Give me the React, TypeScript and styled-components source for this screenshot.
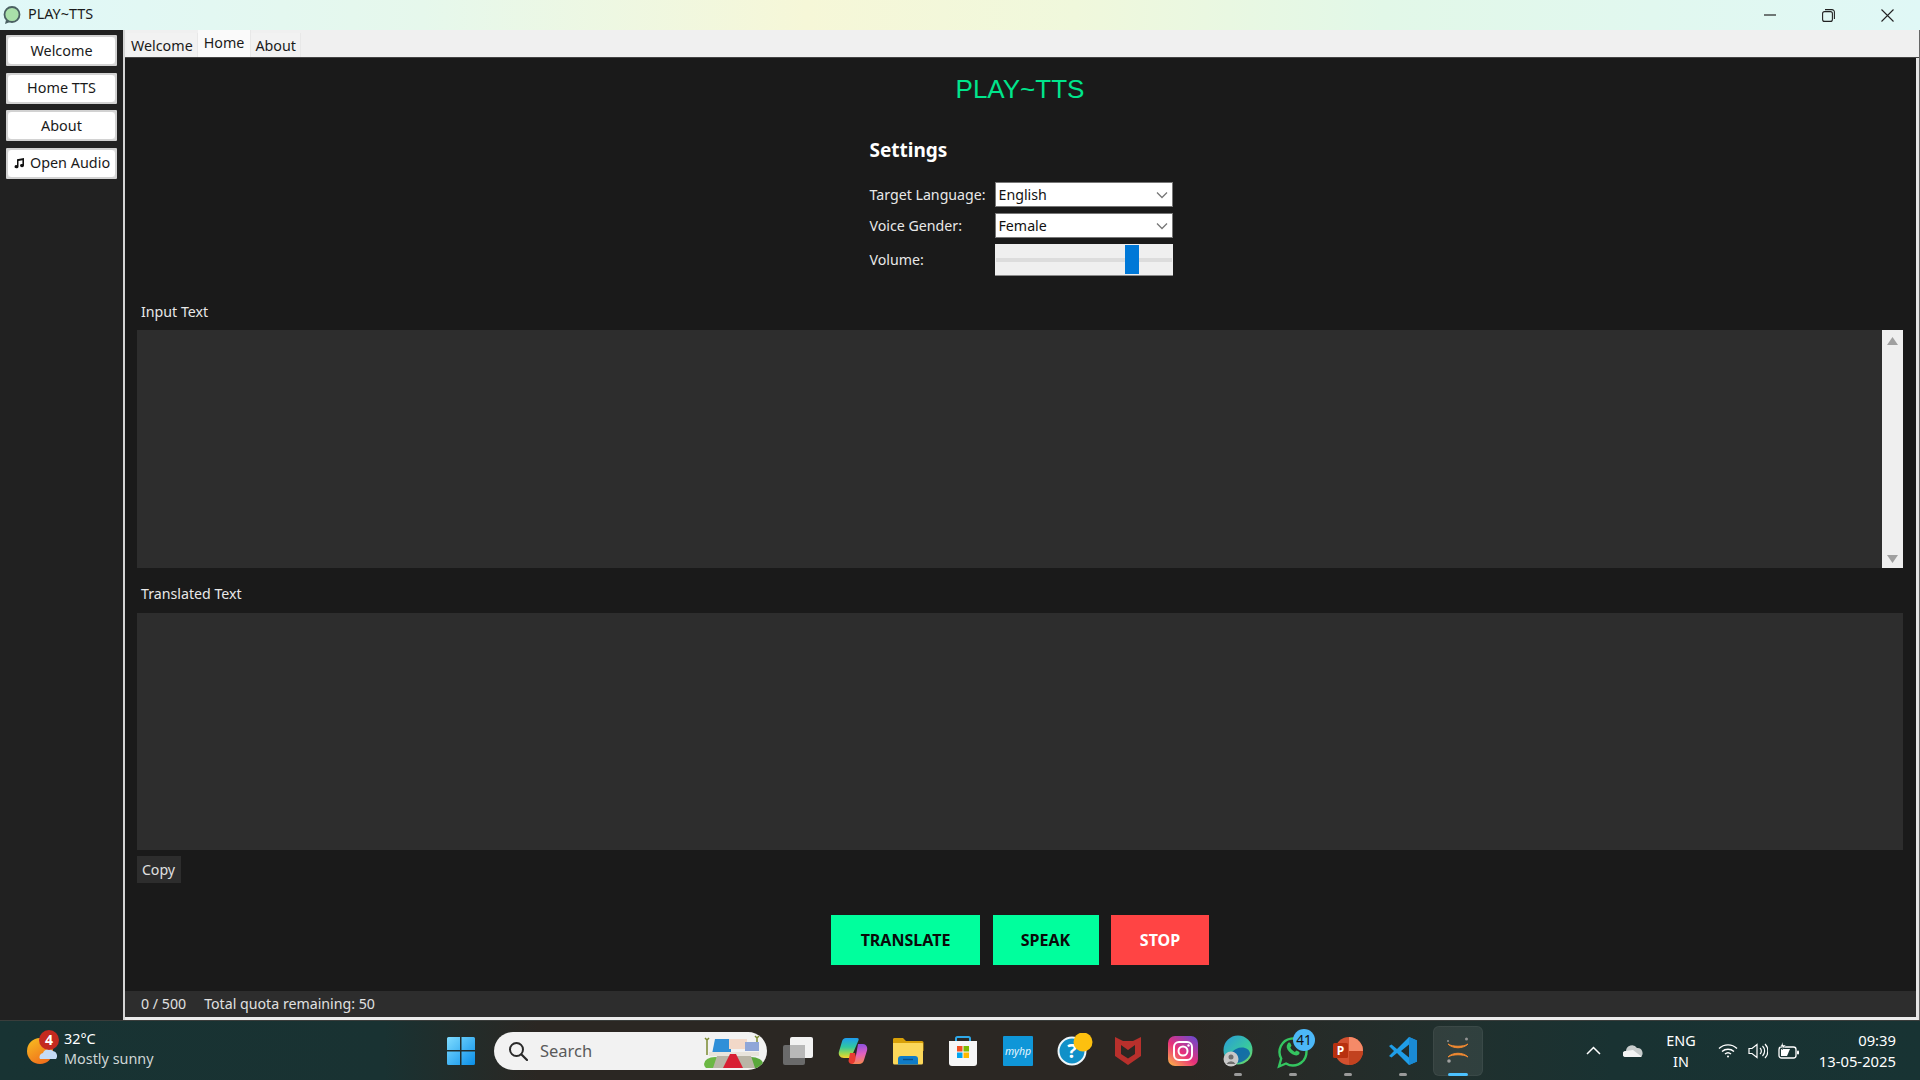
import React from "react";
import styled, { createGlobalStyle } from "styled-components";

const Global = createGlobalStyle`
  html, body { margin: 0; padding: 0; background: #1a1a1a; overflow: hidden; }
  * { box-sizing: border-box; }
  body { font-family: "Noto Sans", "Open Sans", sans-serif; }
`;

const UI = `"Noto Sans", "Open Sans", sans-serif`;

const Screen = styled.div`
  width: 1920px; height: 1080px; display: flex; flex-direction: column; overflow: hidden;
`;

const TitleBar = styled.header`
  height: 30px; flex: none; display: flex; align-items: center; padding-left: 2px;
  background: linear-gradient(90deg, #e0f8f8 0%, #e6f8ec 22%, #f6f7d8 42%, #f0f8dc 56%, #e2f8e8 72%, #e0f8f6 100%);
`;
const TitleText = styled.span`
  font: 14.4px/28px ${UI}; color: #1a1a1a; margin-left: 6px; height: 30px;
`;
const WinControls = styled.div`
  margin-left: auto; display: flex; height: 30px; padding-right: 3px;
`;
const WinBtn = styled.div`
  width: 59px; display: flex; align-items: center; justify-content: center; color: #222;
`;

const Main = styled.div`
  flex: 1; display: flex; min-height: 0;
`;
const Sidebar = styled.nav`
  width: 123px; flex: none; background: #212121; padding: 5px 6px 0 6px;
  display: flex; flex-direction: column; gap: 6.5px;
`;
const NavButton = styled.button`
  height: 31px; width: 111px; padding: 0; border: 2px solid #d2d2d2; border-radius: 1px; background: #e2e2e2;
  font: 14.4px/24px ${UI}; color: #1a1a1a; display: flex;
`;
const NavFace = styled.span`
  flex: 1; background: #fff; border-radius: 4px; display: flex; align-items: center; justify-content: center; gap: 5px;
`;

const Panel = styled.main`
  flex: 1; display: flex; flex-direction: column; min-width: 0;
  border-left: 2px solid #d4d4d4; border-right: 1px solid #666;
`;
const TabBar = styled.div`
  height: 28px; flex: none; background: #f0f0f0; display: flex; align-items: flex-end; padding-left: 2px;
  border-bottom: 1px solid #444;
`;
const Tab = styled.div<{ $on?: boolean }>`
  height: ${p => (p.$on ? 27 : 24)}px; padding: ${p => (p.$on ? "0 6px 3px" : "0 4px")};
  background: ${p => (p.$on ? "#fafafa" : "#f2f2f2")};
  border-right: 1px solid #e8e8e8;
  font: 14.3px ${UI}; color: #1a1a1a; display: flex; align-items: center;
`;
const Body = styled.div`
  flex: 1; min-height: 0; display: flex; border-right: 3px solid #e6e6e6;
`;
const Content = styled.section`
  flex: 1; min-width: 0; background: #1a1a1a; display: flex; flex-direction: column; padding: 0 13px 0 12px;
`;
const AppTitle = styled.h1`
  margin: 15px 0 0; height: 32px; text-align: center;
  font: 400 26px/32px "Liberation Sans", sans-serif; color: #00e58c;
`;
const Settings = styled.div`
  width: 303px; align-self: center; margin: 32px 0 0 2px;
`;
const SettingsHead = styled.h2`
  margin: 0; height: 28px; font: 700 19px/27px ${UI}; color: #fff;
`;
const SettingsGrid = styled.div`
  margin-top: 17px; display: grid; grid-template-columns: 125px 178px; grid-template-rows: 25px 25px 32px; row-gap: 6px; align-items: center;
`;
const FieldLabel = styled.label`
  font: 14.2px/20px ${UI}; color: #e8e8e8;
`;
const Combo = styled.div`
  height: 25px; background: #fff; border: 1px solid #777; display: flex; align-items: center; padding: 0 4px 0 3px;
  font: 14.2px ${UI}; color: #111; justify-content: space-between;
`;
const Slider = styled.div`
  height: 32px; background: #efefef; border-bottom: 1px solid #8a8a8a; position: relative; display: flex; align-items: center; padding: 0 1px;
`;
const SliderTrack = styled.div`
  flex: 1; height: 4px; background: #dcdcdc;
`;
const SliderThumb = styled.div`
  position: absolute; left: 130px; top: 1px; width: 14px; height: 29px; background: #0078d7;
`;
const SectionLabel = styled.div<{ $top: number; $gap: number }>`
  margin: ${p => p.$top}px 0 ${p => p.$gap}px 4px; height: 20px; font: 14.2px/20px ${UI}; color: #e8e8e8;
`;
const TextPane = styled.div<{ $h: number }>`
  height: ${p => p.$h}px; background: #2d2d2d; display: flex; justify-content: flex-end; flex: none;
`;
const Scrollbar = styled.div`
  width: 21px; background: #efefef; display: flex; flex-direction: column; justify-content: space-between; align-items: center; padding: 7px 0 5px;
`;
const CopyBtn = styled.button`
  margin-top: 6px; width: 44px; height: 27px; padding: 0 1px 1px 0; border: 0; background: #2d2d2d; color: #e0e0e0; font: 14.2px ${UI};
`;
const Actions = styled.div`
  margin-top: 32px; display: flex; justify-content: center; gap: 12.5px;
`;
const ActionBtn = styled.button<{ $bg: string; $fg: string; $w: number }>`
  width: ${p => p.$w}px; height: 50px; padding: 0; border: 1px solid ${p => p.$bg}; background: ${p => p.$bg}; color: ${p => p.$fg};
  font: 700 16px ${UI};
`;
const StatusBar = styled.footer`
  height: 29px; flex: none; background: #2d2d2d; border-bottom: 3px solid #ececec; display: flex; align-items: center; padding: 0 0 2px 16px; gap: 18px;
  font: 14.2px ${UI}; color: #e0e0e0; border-right: 3px solid #e6e6e6;
`;

const Taskbar = styled.footer`
  height: 60px; flex: none; display: flex; align-items: center; border-top: 1px solid #3a3d3b;
  background: linear-gradient(90deg, #183333 0%, #193232 20%, #2b2723 28%, #2b2723 62%, #20302e 76%, #193232 84%, #183333 100%);
`;
const Weather = styled.div`
  width: 446px; flex: none; display: flex; align-items: center; padding-left: 26px;
`;
const WeatherIconBox = styled.div`
  width: 38px; height: 42px; flex: none; margin-top: -4px;
`;
const WeatherText = styled.div`
  display: flex; flex-direction: column; font: 14.4px/20px ${UI}; color: #fff; margin-top: -4px;
`;
const WeatherSub = styled.span`
  color: #cfd6d6;
`;
const SearchBox = styled.div`
  width: 273px; height: 38px; margin-left: 18px; margin-right: 3px; border-radius: 19px; background: #f2f2f2; display: flex; align-items: center; padding-left: 14px; overflow: hidden;
  font: 16.5px ${UI}; color: #5a5a5a; flex: none;
`;
const SearchWord = styled.span`
  margin-left: 12px;
`;
const SearchArt = styled.svg`
  margin-left: auto; margin-right: 4px; flex: none;
`;
const Dock = styled.div`
  position: relative; width: 55px; height: 50px; flex: none; display: flex; align-items: center; justify-content: center;
`;
const ActiveTile = styled.div`
  position: absolute; left: 2.5px; top: 0; width: 50px; height: 50px; border-radius: 6px; background: #ffffff14; border: 1px solid #ffffff0d;
`;
const RunDot = styled.span<{ $active?: boolean }>`
  position: absolute; bottom: 0; left: 50%; transform: translateX(-50%); height: 3px; border-radius: 2px;
  width: ${p => (p.$active ? 20 : 8)}px; background: ${p => (p.$active ? "#4cc2ff" : "#9a9a9a")};
`;
const Tray = styled.div`
  margin-left: auto; display: flex; align-items: center; padding-right: 24px; color: #fff;
`;
const TraySlot = styled.div<{ $w: number; $mr?: number }>`
  width: ${p => p.$w}px; margin-right: ${p => p.$mr ?? 0}px; display: flex; align-items: center; justify-content: center; flex: none;
`;
const Lang = styled.div`
  text-align: center; font: 14.4px/21px ${UI}; color: #fff; width: 50px; flex: none;
`;
const Clock = styled.div`
  text-align: right; font: 14.8px/21px ${UI}; color: #fff; width: 92px; white-space: nowrap;
`;

const Chevron = () => (
  <svg width="12" height="8" viewBox="0 0 12 8"><path d="M1 1.500l5 5 5-5" fill="none" stroke="#777" strokeWidth="1.300" /></svg>
);

const AppLogo = () => (
  <svg width="20" height="20" viewBox="0 0 20 20">
    <circle cx="10" cy="9.500" r="7.500" fill="#a9dfa9" stroke="#4a6062" strokeWidth="1.800" />
    <path d="M4 15l-1 4 5-2z" fill="#4a6062" />
  </svg>
);

const Music = () => (
  <svg width="12" height="12" viewBox="0 0 12 12">
    <path d="M4 2.200L11 1v7.600a2 1.600 0 1 1-1.600-1.600V3.300L5.500 4v5.800A2 1.600 0 1 1 4 8.200z" fill="#111" />
  </svg>
);

const WeatherIcon = () => (
  <svg width="38" height="42" viewBox="0 0 38 42">
    <defs>
      <linearGradient id="sun" x1="0" y1="0" x2="0.6" y2="1">
        <stop offset="0" stopColor="#f8c020" /><stop offset="1" stopColor="#f0701c" />
      </linearGradient>
    </defs>
    <circle cx="14" cy="23" r="13" fill="url(#sun)" />
    <path d="M14 31a4 4 0 0 1 3-6 6 6 0 0 1 10-2 5 5 0 0 1 3 8z" fill="#c5dcf5" />
    <circle cx="23" cy="12" r="10" fill="#c42a20" />
    <text x="23" y="17" textAnchor="middle" fontFamily="Noto Sans" fontWeight="700" fontSize="14" fill="#fff">4</text>
  </svg>
);

const WinLogo = () => (
  <svg width="30" height="30" viewBox="0 0 30 30">
    <defs>
      <linearGradient id="w" x1="0" y1="0" x2="1" y2="1">
        <stop offset="0" stopColor="#7fdcff" /><stop offset="1" stopColor="#0a8fe8" />
      </linearGradient>
    </defs>
    <path d="M1 2.500A1.500 1.500 0 0 1 2.500 1H14v13H1zM15.500 1H27.500A1.500 1.500 0 0 1 29 2.500V14H15.500zM1 15.500H14V29H2.500A1.500 1.500 0 0 1 1 27.500zM15.500 15.500H29V27.500A1.500 1.500 0 0 1 27.500 29H15.500z" fill="url(#w)" />
  </svg>
);

const Magnifier = () => (
  <svg width="20" height="20" viewBox="0 0 20 20">
    <circle cx="8.500" cy="8.500" r="6.500" fill="none" stroke="#2a2a2a" strokeWidth="2" />
    <path d="M13.500 13.500L19 19" stroke="#2a2a2a" strokeWidth="2.200" strokeLinecap="round" />
  </svg>
);

const SearchIllustration = () => (
  <SearchArt width="60" height="34" viewBox="0 0 60 34">
    <ellipse cx="12" cy="30" rx="11" ry="7" fill="#6cb844" />
    <ellipse cx="48" cy="30" rx="12" ry="7" fill="#5aa83c" />
    <path d="M2 4l2 2 2-2M4 5v16" stroke="#7a8a30" strokeWidth="1.500" fill="none" />
    <path d="M52 2l2 2 2-2M54 3v14" stroke="#7a8a30" strokeWidth="1.500" fill="none" />
    <path d="M9 20l3-15h16v15z" fill="#2f8fd8" />
    <path d="M26 5h18v10H26z" fill="#f2d8c8" />
    <path d="M42 8h14v9H42z" fill="#8fa6d8" />
    <path d="M6 18h50v4H6z" fill="#e8e4dc" />
    <path d="M14 22h34l4 12H10z" fill="#b9b5a6" />
    <path d="M27 20h6l7 14H20z" fill="#d81f33" />
  </SearchArt>
);

const TaskView = () => (
  <svg width="32" height="30" viewBox="0 0 32 30">
    <rect x="1" y="9" width="22" height="20" rx="2" fill="#6a6a6a" />
    <rect x="8" y="1" width="23" height="21" rx="2" fill="#f2f2f2" />
    <rect x="8" y="9" width="15" height="13" fill="#b8b8b8" />
  </svg>
);

const Copilot = () => (
  <svg width="30" height="26" viewBox="0 0 30 26">
    <defs>
      <linearGradient id="c1" x1="0.3" y1="0" x2="0.3" y2="1">
        <stop offset="0" stopColor="#1f9cf0" /><stop offset="0.45" stopColor="#30c8a0" /><stop offset="0.8" stopColor="#a8d848" /><stop offset="1" stopColor="#f8d030" />
      </linearGradient>
      <linearGradient id="c2" x1="0.5" y1="0" x2="0.6" y2="1">
        <stop offset="0" stopColor="#8a50e0" /><stop offset="0.5" stopColor="#e060c0" /><stop offset="1" stopColor="#f8884c" />
      </linearGradient>
    </defs>
    <path d="M8 0h11c2 0 2 1.500 1.200 3L13 20H6C2 20 0 17 1 13.500L4 3.500C4.500 1.500 6 0 8 0z" fill="url(#c1)" />
    <path d="M12 15l5 0 2 8c.300 1.500-1 3-3 3h-2c-2 0-3-1-3.500-3z" fill="#e83a30" />
    <path d="M20 6h5c3 0 5 3 4 6.500l-3 9.500c-.600 2.500-2.500 4-5 4h-7.500c2 0 3-1.500 3.500-3z" fill="url(#c2)" />
  </svg>
);

const Folder = () => (
  <svg width="32" height="28" viewBox="0 0 32 28">
    <path d="M1 2a1.500 1.500 0 0 1 1.500-1H11l3 3h16a1.500 1.500 0 0 1 1.500 1.500V14H1z" fill="#d8a008" />
    <path d="M1 6h29.500A1 1 0 0 1 31 7v19a1.500 1.500 0 0 1-1.500 1.500h-27A1.500 1.500 0 0 1 1 26z" fill="#fbd75a" />
    <path d="M6 22a3 3 0 0 1 3-3h14a3 3 0 0 1 3 3v5.500H6z" fill="#0f7cc8" />
    <path d="M11 22.500h10" stroke="#0a4f88" strokeWidth="1.400" />
  </svg>
);

const Store = () => (
  <svg width="30" height="32" viewBox="0 0 30 32">
    <path d="M8 7V3.500A1.500 1.500 0 0 1 9.500 2h11A1.500 1.500 0 0 1 22 3.500V7" fill="none" stroke="#2fa8e8" strokeWidth="2" />
    <path d="M1 6h28v22a3 3 0 0 1-3 3H4a3 3 0 0 1-3-3z" fill="#f6f6f6" />
    <rect x="9" y="11" width="5.500" height="5.500" fill="#f25022" />
    <rect x="15.500" y="11" width="5.500" height="5.500" fill="#7fba00" />
    <rect x="9" y="17.500" width="5.500" height="5.500" fill="#00a4ef" />
    <rect x="15.500" y="17.500" width="5.500" height="5.500" fill="#ffb900" />
  </svg>
);

const MyHP = () => (
  <svg width="30" height="30" viewBox="0 0 30 30">
    <rect width="30" height="30" rx="1" fill="#0f96d8" />
    <text x="15" y="19" textAnchor="middle" fontFamily="Noto Sans" fontStyle="italic" fontSize="10.500" fill="#e8f6ff">myhp</text>
  </svg>
);

const Help = () => (
  <svg width="40" height="36" viewBox="0 0 40 36">
    <circle cx="19" cy="18" r="13.500" fill="#1090c8" stroke="#eef6fa" strokeWidth="2" />
    <text x="19" y="25" textAnchor="middle" fontFamily="Noto Sans" fontWeight="700" fontSize="20" fill="#fff">?</text>
    <circle cx="30" cy="9" r="9.500" fill="#fdc00f" />
  </svg>
);

const McAfee = () => (
  <svg width="28" height="30" viewBox="0 0 28 30">
    <path d="M1 1l8 4h10l8-4v19L14 29 1 20z" fill="#b8302c" />
    <path d="M7 9l7 5 7-5v9l-7 4.500L7 18z" fill="#2b2723" />
  </svg>
);

const Instagram = () => (
  <svg width="30" height="30" viewBox="0 0 30 30">
    <defs>
      <linearGradient id="ig" x1="0.1" y1="1" x2="0.9" y2="0">
        <stop offset="0" stopColor="#fdb04a" /><stop offset="0.45" stopColor="#e8307a" /><stop offset="1" stopColor="#6a4ad0" />
      </linearGradient>
    </defs>
    <rect width="30" height="30" rx="7" fill="url(#ig)" />
    <rect x="6" y="6" width="18" height="18" rx="5" fill="none" stroke="#fff" strokeWidth="2" />
    <circle cx="15" cy="15" r="4.500" fill="none" stroke="#fff" strokeWidth="2" />
    <circle cx="20.500" cy="9.500" r="1.200" fill="#fff" />
  </svg>
);

const Edge = () => (
  <svg width="32" height="32" viewBox="0 0 32 32">
    <defs>
      <linearGradient id="e" x1="0" y1="0" x2="1" y2="1">
        <stop offset="0" stopColor="#2a9ad8" /><stop offset="0.6" stopColor="#38c8a0" /><stop offset="1" stopColor="#80d858" />
      </linearGradient>
    </defs>
    <circle cx="16" cy="15" r="14.500" fill="url(#e)" />
    <path d="M14 14c6-3 14-1 14 5-3 7-12 11-18 8-4-3-2-10 4-13z" fill="#0c5fa8" opacity=".85" />
    <circle cx="9" cy="24" r="7.500" fill="#c8c8c8" />
    <circle cx="9" cy="22" r="2.500" fill="#6e6e6e" />
    <path d="M4.500 29a5 5 0 0 1 9 0z" fill="#6e6e6e" />
  </svg>
);

const WhatsApp = () => (
  <svg width="44" height="44" viewBox="0 0 44 44">
    <path d="M8 37.500l2.200-8A13.500 13.500 0 1 1 15 34.500z" fill="none" stroke="#34c560" strokeWidth="2.400" />
    <path d="M16.500 15c1-2 2.500-1.800 3-.5l1 2.300-1.200 1.700c1 2 2.500 3.400 4.500 4.400l1.700-1.300 2.500 1.200c1 .8.700 2-.5 3-3 1.700-7-.5-9.500-3.200-2.500-2.800-3-5.600-1.500-7.600z" fill="#34c560" />
    <circle cx="33" cy="11" r="11" fill="#4cb8f8" />
    <text x="33" y="16" textAnchor="middle" fontFamily="Noto Sans" fontSize="13.500" fill="#111">41</text>
  </svg>
);

const PowerPoint = () => (
  <svg width="30" height="28" viewBox="0 0 30 28">
    <circle cx="16" cy="14" r="14" fill="#d3502f" />
    <path d="M16 0a14 14 0 0 1 14 14H16z" fill="#f58a68" />
    <path d="M16 14h14a14 14 0 0 1-14 14z" fill="#c2421f" />
    <rect y="6" width="15" height="15" rx="1.500" fill="#b7300f" />
    <text x="7.500" y="18" textAnchor="middle" fontFamily="Noto Sans" fontWeight="700" fontSize="12" fill="#fff">P</text>
  </svg>
);

const VSCode = () => (
  <svg width="30" height="30" viewBox="0 0 30 30">
    <path d="M21 1L9 13 3.500 8.500 1 10l5 5-5 5 2.500 1.500L9 17l12 12 8-3.500V4.500zM21 8.500v13L13 15z" fill="#1f9ee8" />
    <path d="M21 1l8 3.500v21L21 29z" fill="#1a8ad4" />
  </svg>
);

const PlayApp = () => (
  <svg width="26" height="30" viewBox="0 0 26 30">
    <path d="M3 8c5 5 15 5 20 0-4 3-16 3-20 0z" fill="#f08020" stroke="#f08020" strokeWidth="1" />
    <path d="M3 21c5-5 15-5 20 0-4-3-16-3-20 0z" fill="#f08020" stroke="#f08020" strokeWidth="1" />
    <circle cx="21.500" cy="3" r="1.500" fill="#8a8a8a" />
    <circle cx="3" cy="5" r="1" fill="#8a8a8a" />
    <circle cx="4" cy="25" r="1.800" fill="#9a9a9a" />
  </svg>
);

const TrayChevron = () => (
  <svg width="15" height="9" viewBox="0 0 15 9"><path d="M1 8l6.500-6.500L14 8" fill="none" stroke="#fff" strokeWidth="1.500" /></svg>
);
const OneDrive = () => (
  <svg width="21" height="14" viewBox="0 0 21 14">
    <path d="M3 13a3 3 0 0 1 0-6 6 6 0 0 1 11-3 5 5 0 0 1 3.500 9z" fill="#c8cccc" />
    <path d="M3 13a3 3 0 0 1-.5-6L10 6l9 7z" fill="#f4f4f4" />
  </svg>
);
const Wifi = () => (
  <svg width="20" height="15" viewBox="0 0 20 15" fill="none" stroke="#fff" strokeWidth="1.400">
    <path d="M1 5.500a13 13 0 0 1 18 0M4 8.500a9 9 0 0 1 12 0M7 11a4.500 4.500 0 0 1 6 0" />
    <circle cx="10" cy="13.500" r="1" fill="#fff" stroke="none" />
  </svg>
);
const Volume = () => (
  <svg width="20" height="16" viewBox="0 0 20 16" fill="none" stroke="#fff" strokeWidth="1.200">
    <path d="M1 5.500h3L9 1.500v13l-5-4H1z" />
    <path d="M12 5a4 4 0 0 1 0 6M14.500 3a7 7 0 0 1 0 10M17 1a10 10 0 0 1 0 14" />
  </svg>
);
const Battery = () => (
  <svg width="21" height="18" viewBox="0 0 21 18">
    <rect x="1" y="5" width="17" height="11" rx="2.500" fill="none" stroke="#fff" strokeWidth="1.300" />
    <path d="M3 7h9l-3 7H3z" fill="#fff" />
    <rect x="19" y="8.500" width="2" height="4" rx="1" fill="#fff" />
    <path d="M5 0L2 5h3L4 8l4-5H5z" fill="#fff" stroke="#193232" strokeWidth=".5" />
  </svg>
);

const dock: [React.ComponentType, boolean][] = [
  [TaskView, false], [Copilot, false], [Folder, false], [Store, false], [MyHP, false], [Help, false],
  [McAfee, false], [Instagram, false], [Edge, true], [WhatsApp, true], [PowerPoint, true], [VSCode, true],
];

export default function App() {
  return (
    <Screen>
      <Global />
      <TitleBar>
        <AppLogo />
        <TitleText>PLAY~TTS</TitleText>
        <WinControls>
          <WinBtn><svg width="12" height="2" viewBox="0 0 12 2"><path d="M0 1h12" stroke="#222" strokeWidth="1.200" /></svg></WinBtn>
          <WinBtn><svg width="13" height="13" viewBox="0 0 13 13" fill="none" stroke="#222" strokeWidth="1.100"><rect x=".6" y="2.600" width="9.800" height="9.800" rx="2" /><path d="M3 .6h7a2.400 2.400 0 0 1 2.400 2.400v7" /></svg></WinBtn>
          <WinBtn><svg width="13" height="13" viewBox="0 0 13 13"><path d="M.5.500l12 12M12.500.500l-12 12" stroke="#222" strokeWidth="1.100" /></svg></WinBtn>
        </WinControls>
      </TitleBar>
      <Main>
        <Sidebar>
          <NavButton><NavFace>Welcome</NavFace></NavButton>
          <NavButton><NavFace>Home TTS</NavFace></NavButton>
          <NavButton><NavFace>About</NavFace></NavButton>
          <NavButton><NavFace><Music />Open Audio</NavFace></NavButton>
        </Sidebar>
        <Panel>
          <TabBar>
            <Tab>Welcome</Tab>
            <Tab $on>Home</Tab>
            <Tab>About</Tab>
          </TabBar>
          <Body>
            <Content>
              <AppTitle>PLAY~TTS</AppTitle>
              <Settings>
                <SettingsHead>Settings</SettingsHead>
                <SettingsGrid>
                  <FieldLabel>Target Language:</FieldLabel>
                  <Combo>English<Chevron /></Combo>
                  <FieldLabel>Voice Gender:</FieldLabel>
                  <Combo>Female<Chevron /></Combo>
                  <FieldLabel>Volume:</FieldLabel>
                  <Slider><SliderTrack /><SliderThumb /></Slider>
                </SettingsGrid>
              </Settings>
              <SectionLabel $top={26} $gap={8}>Input Text</SectionLabel>
              <TextPane $h={238}>
                <Scrollbar>
                  <svg width="11" height="8" viewBox="0 0 11 8"><path d="M5.500 0L11 8H0z" fill="#a0a0a0" /></svg>
                  <svg width="11" height="8" viewBox="0 0 11 8"><path d="M5.500 8L11 0H0z" fill="#a0a0a0" /></svg>
                </Scrollbar>
              </TextPane>
              <SectionLabel $top={16} $gap={9}>Translated Text</SectionLabel>
              <TextPane $h={237} />
              <CopyBtn>Copy</CopyBtn>
              <Actions>
                <ActionBtn $bg="#00ff9d" $fg="#0a0a0a" $w={149}>TRANSLATE</ActionBtn>
                <ActionBtn $bg="#00ff9d" $fg="#0a0a0a" $w={106}>SPEAK</ActionBtn>
                <ActionBtn $bg="#ff4444" $fg="#ffffff" $w={98}>STOP</ActionBtn>
              </Actions>
            </Content>
          </Body>
          <StatusBar><span>0 / 500</span><span>Total quota remaining: 50</span></StatusBar>
        </Panel>
      </Main>
      <Taskbar>
        <Weather>
          <WeatherIconBox><WeatherIcon /></WeatherIconBox>
          <WeatherText>32°C<WeatherSub>Mostly sunny</WeatherSub></WeatherText>
        </Weather>
        <WinLogo />
        <SearchBox>
          <Magnifier />
          <SearchWord>Search</SearchWord>
          <SearchIllustration />
        </SearchBox>
        {dock.map(([Icon, running], i) => (
          <Dock key={i}><Icon />{running && <RunDot />}</Dock>
        ))}
        <Dock><ActiveTile /><PlayApp /><RunDot $active /></Dock>
        <Tray>
          <TraySlot $w={30}><TrayChevron /></TraySlot>
          <TraySlot $w={50}><OneDrive /></TraySlot>
          <TraySlot $w={46} $mr={8}><Lang>ENG<br />IN</Lang></TraySlot>
          <TraySlot $w={31}><Wifi /></TraySlot>
          <TraySlot $w={30}><Volume /></TraySlot>
          <TraySlot $w={31}><Battery /></TraySlot>
          <Clock>09:39<br />13-05-2025</Clock>
        </Tray>
      </Taskbar>
    </Screen>
  );
}
